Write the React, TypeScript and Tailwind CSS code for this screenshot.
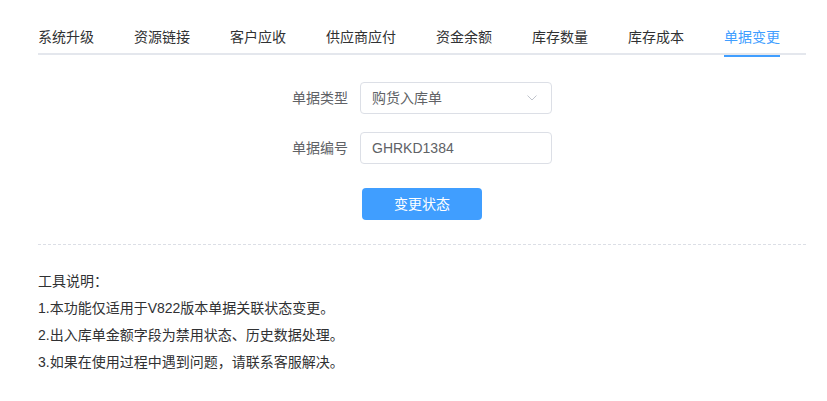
import React, { useState } from 'react';

const tabs = ['系统升级', '资源链接', '客户应收', '供应商应付', '资金余额', '库存数量', '库存成本', '单据变更'];

const notes = [
  '工具说明：',
  '1.本功能仅适用于V822版本单据关联状态变更。',
  '2.出入库单金额字段为禁用状态、历史数据处理。',
  '3.如果在使用过程中遇到问题，请联系客服解决。',
];

export default function App() {
  const [active, setActive] = useState(7);

  return (
    <div
      className="w-[827px] h-[401px] bg-white text-[14px] text-[#303133]"
      style={{ fontFamily: '"Liberation Sans", "Noto Sans CJK SC", sans-serif' }}
    >
      <div className="ml-[38px] w-[768px] pt-[15px]">
        {/* Tab header */}
        <div className="relative flex h-[40px] border-b-2 border-[#e4e7ed]">
          {tabs.map((t, i) => (
            <div
              key={t}
              onClick={() => setActive(i)}
              className={`relative h-[40px] leading-[44px] cursor-pointer ${i === 0 ? 'pr-[20px]' : 'px-[20px]'} ${
                i === active ? 'text-[#409eff]' : 'text-[#303133]'
              }`}
            >
              {t}
              {i === active && (
                <div className="absolute left-[20px] right-[20px] -bottom-[2px] h-[2px] bg-[#409eff]" />
              )}
            </div>
          ))}
        </div>

        {/* Form */}
        <div className="pt-[27px] flex flex-col items-start">
          <div className="flex items-center h-[32px]">
            <label className="w-[322px] pr-[12px] text-right text-[#606266]">单据类型</label>
            <div className="w-[192px] h-[32px] border border-[#dcdfe6] rounded-[4px] flex items-center pl-[11px] pr-[14px] text-[#606266]">
              <span className="flex-1">购货入库单</span>
              <svg width="10" height="6" viewBox="0 0 10 6" fill="none">
                <path d="M0.5 0.5L5 5L9.5 0.5" stroke="#c0c4cc" strokeWidth="1" />
              </svg>
            </div>
          </div>
          <div className="flex items-center h-[32px] mt-[18px]">
            <label className="w-[322px] pr-[12px] text-right text-[#606266]">单据编号</label>
            <div className="w-[192px] h-[32px] border border-[#dcdfe6] rounded-[4px] flex items-center pl-[11px] text-[#606266]">
              GHRKD1384
            </div>
          </div>
          <button className="ml-[324px] mt-[24px] w-[120px] h-[32px] rounded-[4px] bg-[#409eff] text-white text-[14px]">
            变更状态
          </button>
        </div>

        <div className="mt-[24px] border-t border-dashed border-[#dcdfe6]" />

        {/* Notes */}
        <div className="pt-[23px]">
          {notes.map((n) => (
            <p key={n} className="leading-[27px] text-[#303133]">
              {n}
            </p>
          ))}
        </div>
      </div>
    </div>
  );
}
